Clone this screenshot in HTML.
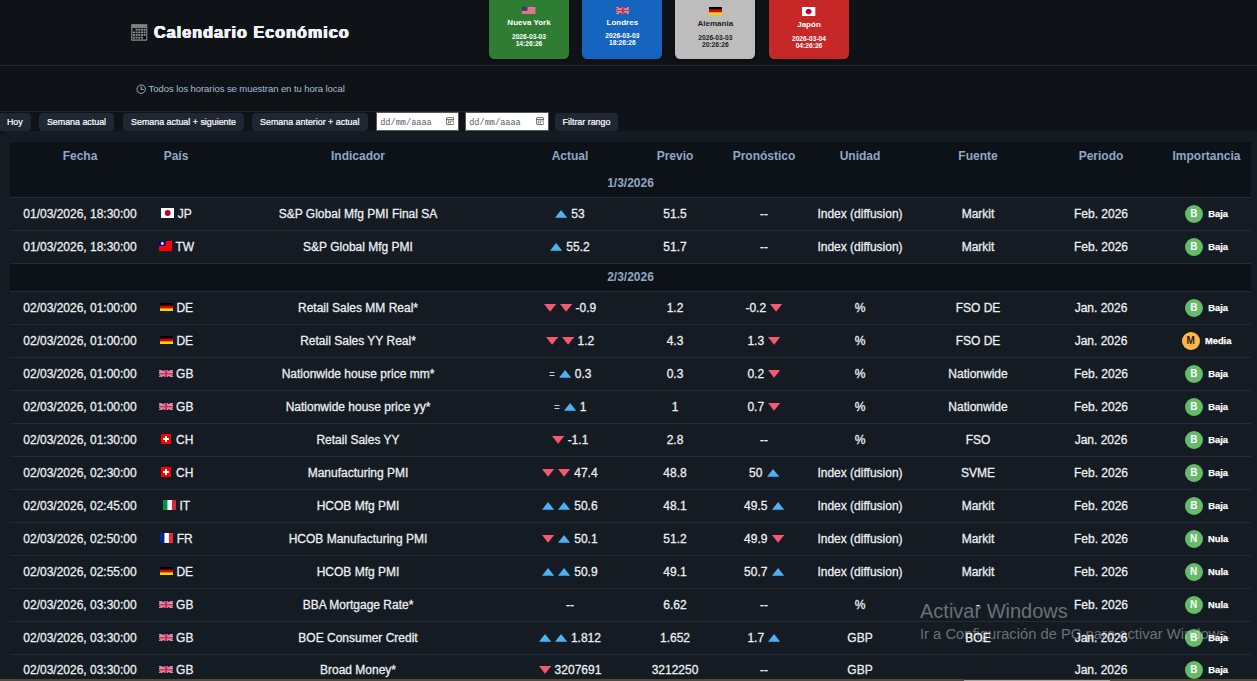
<!DOCTYPE html>
<html lang="es"><head><meta charset="utf-8"><title>Calendario Económico</title>
<style>
*{box-sizing:border-box}
html,body{margin:0;padding:0}
body{width:1257px;height:681px;overflow:hidden;position:relative;background:#0f1216;font-family:"Liberation Sans",Arial,sans-serif;color:#e6edf3;font-variant-ligatures:none}
.hd{position:absolute;left:0;top:0;width:1257px;height:66px;border-bottom:1px solid #1f2935}
.ti{position:absolute;left:131.2px;top:23.8px;width:16.4px;height:17px}
h1{position:absolute;left:154px;top:23px;margin:0;font-size:16px;line-height:20px;font-weight:bold;letter-spacing:1.12px;color:#f0f3f7;white-space:nowrap;text-shadow:0.55px 0 0 #f0f3f7,-0.55px 0 0 #f0f3f7,0.25px 0 0 #f0f3f7,-0.25px 0 0 #f0f3f7}
.card{position:absolute;top:-8px;width:80px;height:67px;border-radius:5.2px;text-align:center;font-weight:bold;box-shadow:0 1px 3px rgba(0,0,0,.35)}
.card div{position:absolute;left:0;width:80px;text-align:center;white-space:nowrap}
.cf{line-height:0}
.card .fl{display:block;margin:0 auto}
.cn{font-size:8px;line-height:10px;height:10px}
.ct{font-size:6.67px;line-height:8px;height:8px}
.info{position:absolute;left:0;top:66px;width:481px;height:46px;border-bottom:1px solid #1b232d}
.btn{position:absolute;top:113px;height:18px;border-radius:4px;background:#1f2832;color:#fff;font-size:8.89px;line-height:18px;text-align:center;white-space:nowrap;-webkit-text-stroke:0.2px}
.di{position:absolute;top:112px;height:18.5px;background:#fff;border:1px solid #55595f;font-family:"Liberation Mono",monospace;font-size:8.6px;line-height:17px;color:#5a5d66;padding-left:3.2px;padding-top:1.7px;white-space:nowrap}
.di svg{position:absolute;right:3.8px;top:4.3px}
.wrap{position:absolute;left:-0.7px;top:131.3px;width:1262.4px;height:600px;background:#151b22;border-radius:9px}
table{position:absolute;left:10.7px;top:10.7px;width:1241px;border-collapse:separate;border-spacing:0;table-layout:fixed;font-size:12px}
th{height:28px;background:#0d1218;color:#90a7c6;font-weight:bold;font-size:12px;padding:0;text-align:center;vertical-align:middle}
td{height:33px;padding:0;text-align:center;vertical-align:middle;white-space:nowrap;border-bottom:1px solid #222b36;color:#eceff3;-webkit-text-stroke:0.28px}
tbody tr:last-child td{padding-bottom:2px}
td:nth-child(2){padding-left:.8px}
tr.g td{height:28px;background:#0d1218;color:#90a7c6;font-weight:bold;padding-bottom:0;-webkit-text-stroke:0}
i{display:inline-block;font-style:normal;position:relative;height:0;vertical-align:baseline}
i svg{position:absolute;left:0;bottom:0}
.f{width:13.33px;margin-right:3.33px}
.a{width:12.2px;margin-right:3.75px}
.a.r{margin-right:0;margin-left:4.3px}
.ae{display:inline-block;width:7px;text-align:center;color:#c9ced5;position:relative;top:-0.4px;font-size:10px;-webkit-text-stroke:0}
.bd{width:18px;margin-right:5.3px}
.bd b{position:absolute;left:0;bottom:-4.9px;width:18px;height:18px;border-radius:50%;font-size:10px;line-height:18px;text-align:center;font-weight:bold}
.b b,.n b{background:#66bb6a;color:#fff}
.m b{background:#ffb74d;color:#222}
.bd b{-webkit-text-stroke:0}
.lb{-webkit-text-stroke:0.25px}
.lb{font-size:9.33px;font-weight:bold;color:#fff;position:relative;top:-.5px}
.wm{position:absolute;left:920px;top:599px;color:rgba(255,255,255,.38);white-space:nowrap;pointer-events:none}
.wm div:first-child{font-size:20px;line-height:24px}
.wm div:last-child{font-size:14.75px;line-height:18px;margin-top:2px}
.bar{position:absolute;left:0;top:678.8px;width:1257px;height:3px;background:#514a38}
.bar i{position:absolute;left:963.6px;top:0;width:146.5px;height:3px;background:linear-gradient(#3b3627 0,#3b3627 1px,#a8a69a 1.2px);display:block}
</style></head><body>
<div class="hd">
<svg class="ti" viewBox="0 0 16.4 17"><rect width="16.4" height="17" rx="1.2" fill="#6b6c6e"/><rect x="0.6" y="0.5" width="15.2" height="3.2" rx="0.8" fill="#7f8082"/><rect x="1.5" y="4.2" width="13.5" height="11" fill="#08090b"/><g fill="#8f9194"><rect x="4.58" y="4.90" width="2.05" height="1.75"/><rect x="7.26" y="4.90" width="2.05" height="1.75"/><rect x="9.94" y="4.90" width="2.05" height="1.75"/><rect x="12.62" y="4.90" width="2.05" height="1.75"/><rect x="1.90" y="7.52" width="2.05" height="1.75"/><rect x="4.58" y="7.52" width="2.05" height="1.75"/><rect x="7.26" y="7.52" width="2.05" height="1.75"/><rect x="9.94" y="7.52" width="2.05" height="1.75"/><rect x="12.62" y="7.52" width="2.05" height="1.75"/><rect x="1.90" y="10.14" width="2.05" height="1.75"/><rect x="4.58" y="10.14" width="2.05" height="1.75"/><rect x="7.26" y="10.14" width="2.05" height="1.75"/><rect x="9.94" y="10.14" width="2.05" height="1.75"/><rect x="12.62" y="10.14" width="2.05" height="1.75"/><rect x="1.90" y="12.76" width="2.05" height="1.75"/><rect x="4.58" y="12.76" width="2.05" height="1.75"/><rect x="7.26" y="12.76" width="2.05" height="1.75"/><rect x="9.94" y="12.76" width="2.05" height="1.75"/></g></svg>
<h1>Calendario Económico</h1>
<div class="card" style="left:489px;background:#2e7d32;color:#fff"><div class="cf" style="top:14.9px"><svg class="fl" width="13.33" height="7.1" viewBox="0 0 20 11" preserveAspectRatio="none"><rect width="20" height="11" fill="#e58a9b"/><path d="M0 1.27H20M0 2.96H20M0 4.65H20M0 6.34H20M0 8.03H20M0 9.72H20" stroke="#d95f78" stroke-width="0.85"/><rect width="8.2" height="5.9" fill="#3c3b6e"/></svg></div><div class="cn" style="top:25.9px">Nueva York</div><div class="ct" style="top:40.9px">2026-03-03</div><div class="ct" style="top:48.2px">14:26:26</div></div><div class="card" style="left:582.33px;background:#1565c0;color:#fff"><div class="cf" style="top:14.9px"><svg class="fl" width="13.6" height="7.0" viewBox="0 0 20 10" preserveAspectRatio="none"><rect width="20" height="10" fill="#27367a"/><path d="M0 0L20 10M20 0L0 10" stroke="#f2e6ea" stroke-width="2.2"/><path d="M0 0L20 10M20 0L0 10" stroke="#d83a58" stroke-width="1.1"/><path d="M10 0V10M0 5H20" stroke="#f6eef0" stroke-width="4.2"/><path d="M10 0V10" stroke="#d62b4b" stroke-width="3.2"/><path d="M0 5H20" stroke="#d62b4b" stroke-width="3"/></svg></div><div class="cn" style="top:25.9px">Londres</div><div class="ct" style="top:39.8px">2026-03-03</div><div class="ct" style="top:47.1px">18:26:26</div></div><div class="card" style="left:675.33px;background:#bdbdbd;color:#222"><div class="cf" style="top:14.8px"><svg class="fl" width="13.33" height="8.2" viewBox="0 0 20 12" preserveAspectRatio="none"><rect width="20" height="4" fill="#000"/><rect y="4" width="20" height="4" fill="#dd0000"/><rect y="8" width="20" height="4" fill="#ffce00"/></svg></div><div class="cn" style="top:26.7px">Alemania</div><div class="ct" style="top:41.7px">2026-03-03</div><div class="ct" style="top:49.3px">20:26:26</div></div><div class="card" style="left:769px;background:#c62828;color:#fff"><div class="cf" style="top:14.8px"><svg class="fl" width="13.33" height="9.1" viewBox="0 0 20 15" preserveAspectRatio="none"><rect width="20" height="15" fill="#fff"/><circle cx="10" cy="7.5" r="4.4" fill="#bc002d"/></svg></div><div class="cn" style="top:27.9px">Japón</div><div class="ct" style="top:42.7px">2026-03-04</div><div class="ct" style="top:50.3px">04:26:26</div></div>
</div>
<div class="info"></div>
<svg style="position:absolute;left:135.8px;top:83.9px" width="10.4" height="10.4" viewBox="0 0 10.4 10.4"><circle cx="5.2" cy="5.2" r="4.2" fill="none" stroke="#a7bcd6" stroke-width="0.9"/><path d="M5.2 2.5V5.5H7.6" fill="none" stroke="#a7bcd6" stroke-width="1"/></svg>
<span style="position:absolute;left:148.6px;top:83.2px;font-size:9.5px;letter-spacing:-.075px;line-height:12px;color:#a7bcd6;white-space:nowrap">Todos los horarios se muestran en tu hora local</span>
<div class="btn" style="left:-2px;width:33px;padding-left:0.6px">Hoy</div>
<div class="btn" style="left:39px;width:75px">Semana actual</div>
<div class="btn" style="left:123px;width:121px">Semana actual + siguiente</div>
<div class="btn" style="left:252px;width:115.5px">Semana anterior + actual</div>
<div class="di" style="left:376px;width:83px">dd/mm/aaaa<svg width="8.4" height="8" viewBox="0 0 8.4 8"><rect x="0.4" y="0.4" width="7.6" height="7.2" rx="1.6" fill="none" stroke="#3a3a3a" stroke-width="0.75"/><path d="M0.4 2.5H8" stroke="#3a3a3a" stroke-width="0.7"/><rect x="1.9" y="3.6" width="1.2" height="1" fill="#444"/><rect x="3.7" y="3.6" width="1.2" height="1" fill="#444"/><rect x="5.5" y="3.6" width="1.2" height="1" fill="#444"/><rect x="1.9" y="5.3" width="1.2" height="1" fill="#444"/><rect x="3.7" y="5.3" width="1.2" height="1" fill="#444"/></svg></div>
<div class="di" style="left:465px;width:84px">dd/mm/aaaa<svg width="8.4" height="8" viewBox="0 0 8.4 8"><rect x="0.4" y="0.4" width="7.6" height="7.2" rx="1.6" fill="none" stroke="#3a3a3a" stroke-width="0.75"/><path d="M0.4 2.5H8" stroke="#3a3a3a" stroke-width="0.7"/><rect x="1.9" y="3.6" width="1.2" height="1" fill="#444"/><rect x="3.7" y="3.6" width="1.2" height="1" fill="#444"/><rect x="5.5" y="3.6" width="1.2" height="1" fill="#444"/><rect x="1.9" y="5.3" width="1.2" height="1" fill="#444"/><rect x="3.7" y="5.3" width="1.2" height="1" fill="#444"/></svg></div>
<div class="btn" style="left:555px;width:63px">Filtrar rango</div>
<div class="wrap">
<table>
<colgroup><col style="width:140px"><col style="width:52px"><col style="width:312px"><col style="width:112px"><col style="width:98px"><col style="width:80px"><col style="width:112px"><col style="width:124px"><col style="width:122px"><col style="width:89px"></colgroup>
<thead><tr><th>Fecha</th><th>País</th><th>Indicador</th><th>Actual</th><th>Previo</th><th>Pronóstico</th><th>Unidad</th><th>Fuente</th><th>Periodo</th><th>Importancia</th></tr></thead>
<tbody>
<tr class="g"><td colspan="10">1/3/2026</td></tr>
<tr><td>01/03/2026, 18:30:00</td><td><i class="f"><svg style="left:0.00px;bottom:-0.20px" width="13.33" height="10" viewBox="0 0 20 15" preserveAspectRatio="none"><rect width="20" height="15" fill="#fff"/><circle cx="10" cy="7.5" r="4.4" fill="#bc002d"/></svg></i>JP</td><td>S&amp;P Global Mfg PMI Final SA</td><td><i class="a"><svg width="12.2" height="7.7" viewBox="0 0 12.2 7.7"><path d="M6.1 0L12.2 7.7H0Z" fill="#4db2f5"/></svg></i>53</td><td>51.5</td><td>--</td><td>Index (diffusion)</td><td>Markit</td><td>Feb. 2026</td><td><i class="bd b"><b>B</b></i><span class="lb">Baja</span></td></tr>
<tr><td>01/03/2026, 18:30:00</td><td><i class="f"><svg style="left:0.00px;bottom:-0.20px" width="13.33" height="10" viewBox="0 0 20 15" preserveAspectRatio="none"><rect width="20" height="15" fill="#fe0000"/><rect width="10" height="7.5" fill="#000095"/><circle cx="5" cy="3.75" r="2.1" fill="#fff"/></svg></i>TW</td><td>S&amp;P Global Mfg PMI</td><td><i class="a"><svg width="12.2" height="7.7" viewBox="0 0 12.2 7.7"><path d="M6.1 0L12.2 7.7H0Z" fill="#4db2f5"/></svg></i>55.2</td><td>51.7</td><td>--</td><td>Index (diffusion)</td><td>Markit</td><td>Feb. 2026</td><td><i class="bd b"><b>B</b></i><span class="lb">Baja</span></td></tr>
<tr class="g"><td colspan="10">2/3/2026</td></tr>
<tr><td>02/03/2026, 01:00:00</td><td><i class="f"><svg style="left:0.00px;bottom:0.80px" width="13.33" height="8" viewBox="0 0 20 12" preserveAspectRatio="none"><rect width="20" height="4" fill="#000"/><rect y="4" width="20" height="4" fill="#dd0000"/><rect y="8" width="20" height="4" fill="#ffce00"/></svg></i>DE</td><td>Retail Sales MM Real*</td><td><i class="a"><svg width="12.2" height="7.7" viewBox="0 0 12.2 7.7"><path d="M0 0H12.2L6.1 7.7Z" fill="#f6586e"/></svg></i><i class="a"><svg width="12.2" height="7.7" viewBox="0 0 12.2 7.7"><path d="M0 0H12.2L6.1 7.7Z" fill="#f6586e"/></svg></i>-0.9</td><td>1.2</td><td>-0.2<i class="a r"><svg width="12.2" height="7.7" viewBox="0 0 12.2 7.7"><path d="M0 0H12.2L6.1 7.7Z" fill="#f6586e"/></svg></i></td><td>%</td><td>FSO DE</td><td>Jan. 2026</td><td><i class="bd b"><b>B</b></i><span class="lb">Baja</span></td></tr>
<tr><td>02/03/2026, 01:00:00</td><td><i class="f"><svg style="left:0.00px;bottom:0.80px" width="13.33" height="8" viewBox="0 0 20 12" preserveAspectRatio="none"><rect width="20" height="4" fill="#000"/><rect y="4" width="20" height="4" fill="#dd0000"/><rect y="8" width="20" height="4" fill="#ffce00"/></svg></i>DE</td><td>Retail Sales YY Real*</td><td><i class="a"><svg width="12.2" height="7.7" viewBox="0 0 12.2 7.7"><path d="M0 0H12.2L6.1 7.7Z" fill="#f6586e"/></svg></i><i class="a"><svg width="12.2" height="7.7" viewBox="0 0 12.2 7.7"><path d="M0 0H12.2L6.1 7.7Z" fill="#f6586e"/></svg></i>1.2</td><td>4.3</td><td>1.3<i class="a r"><svg width="12.2" height="7.7" viewBox="0 0 12.2 7.7"><path d="M0 0H12.2L6.1 7.7Z" fill="#f6586e"/></svg></i></td><td>%</td><td>FSO DE</td><td>Jan. 2026</td><td><i class="bd m"><b>M</b></i><span class="lb">Media</span></td></tr>
<tr><td>02/03/2026, 01:00:00</td><td><i class="f"><svg style="left:-0.38px;bottom:1.20px" width="14.1" height="7.2" viewBox="0 0 20 10" preserveAspectRatio="none"><rect width="20" height="10" fill="#27367a"/><path d="M0 0L20 10M20 0L0 10" stroke="#f2e6ea" stroke-width="2.2"/><path d="M0 0L20 10M20 0L0 10" stroke="#d83a58" stroke-width="1.1"/><path d="M10 0V10M0 5H20" stroke="#f6eef0" stroke-width="4.2"/><path d="M10 0V10" stroke="#d62b4b" stroke-width="3.2"/><path d="M0 5H20" stroke="#d62b4b" stroke-width="3"/></svg></i>GB</td><td>Nationwide house price mm*</td><td><span class="ae">=</span> <i class="a"><svg width="12.2" height="7.7" viewBox="0 0 12.2 7.7"><path d="M6.1 0L12.2 7.7H0Z" fill="#4db2f5"/></svg></i>0.3</td><td>0.3</td><td>0.2<i class="a r"><svg width="12.2" height="7.7" viewBox="0 0 12.2 7.7"><path d="M0 0H12.2L6.1 7.7Z" fill="#f6586e"/></svg></i></td><td>%</td><td>Nationwide</td><td>Feb. 2026</td><td><i class="bd b"><b>B</b></i><span class="lb">Baja</span></td></tr>
<tr><td>02/03/2026, 01:00:00</td><td><i class="f"><svg style="left:-0.38px;bottom:1.20px" width="14.1" height="7.2" viewBox="0 0 20 10" preserveAspectRatio="none"><rect width="20" height="10" fill="#27367a"/><path d="M0 0L20 10M20 0L0 10" stroke="#f2e6ea" stroke-width="2.2"/><path d="M0 0L20 10M20 0L0 10" stroke="#d83a58" stroke-width="1.1"/><path d="M10 0V10M0 5H20" stroke="#f6eef0" stroke-width="4.2"/><path d="M10 0V10" stroke="#d62b4b" stroke-width="3.2"/><path d="M0 5H20" stroke="#d62b4b" stroke-width="3"/></svg></i>GB</td><td>Nationwide house price yy*</td><td><span class="ae">=</span> <i class="a"><svg width="12.2" height="7.7" viewBox="0 0 12.2 7.7"><path d="M6.1 0L12.2 7.7H0Z" fill="#4db2f5"/></svg></i>1</td><td>1</td><td>0.7<i class="a r"><svg width="12.2" height="7.7" viewBox="0 0 12.2 7.7"><path d="M0 0H12.2L6.1 7.7Z" fill="#f6586e"/></svg></i></td><td>%</td><td>Nationwide</td><td>Feb. 2026</td><td><i class="bd b"><b>B</b></i><span class="lb">Baja</span></td></tr>
<tr><td>02/03/2026, 01:30:00</td><td><i class="f"><svg style="left:1.67px;bottom:-0.20px" width="10" height="10" viewBox="0 0 20 20" preserveAspectRatio="none"><rect width="20" height="20" fill="#ff0000"/><path d="M10 4V16M4 10H16" stroke="#fff" stroke-width="3.8"/></svg></i>CH</td><td>Retail Sales YY</td><td><i class="a"><svg width="12.2" height="7.7" viewBox="0 0 12.2 7.7"><path d="M0 0H12.2L6.1 7.7Z" fill="#f6586e"/></svg></i>-1.1</td><td>2.8</td><td>--</td><td>%</td><td>FSO</td><td>Jan. 2026</td><td><i class="bd b"><b>B</b></i><span class="lb">Baja</span></td></tr>
<tr><td>02/03/2026, 02:30:00</td><td><i class="f"><svg style="left:1.67px;bottom:-0.20px" width="10" height="10" viewBox="0 0 20 20" preserveAspectRatio="none"><rect width="20" height="20" fill="#ff0000"/><path d="M10 4V16M4 10H16" stroke="#fff" stroke-width="3.8"/></svg></i>CH</td><td>Manufacturing PMI</td><td><i class="a"><svg width="12.2" height="7.7" viewBox="0 0 12.2 7.7"><path d="M0 0H12.2L6.1 7.7Z" fill="#f6586e"/></svg></i><i class="a"><svg width="12.2" height="7.7" viewBox="0 0 12.2 7.7"><path d="M0 0H12.2L6.1 7.7Z" fill="#f6586e"/></svg></i>47.4</td><td>48.8</td><td>50<i class="a r"><svg width="12.2" height="7.7" viewBox="0 0 12.2 7.7"><path d="M6.1 0L12.2 7.7H0Z" fill="#4db2f5"/></svg></i></td><td>Index (diffusion)</td><td>SVME</td><td>Feb. 2026</td><td><i class="bd b"><b>B</b></i><span class="lb">Baja</span></td></tr>
<tr><td>02/03/2026, 02:45:00</td><td><i class="f"><svg style="left:0.00px;bottom:-0.20px" width="13.33" height="10" viewBox="0 0 20 15" preserveAspectRatio="none"><rect width="20" height="15" fill="#fff"/><rect width="6.67" height="15" fill="#009246"/><rect x="13.33" width="6.67" height="15" fill="#ce2b37"/></svg></i>IT</td><td>HCOB Mfg PMI</td><td><i class="a"><svg width="12.2" height="7.7" viewBox="0 0 12.2 7.7"><path d="M6.1 0L12.2 7.7H0Z" fill="#4db2f5"/></svg></i><i class="a"><svg width="12.2" height="7.7" viewBox="0 0 12.2 7.7"><path d="M6.1 0L12.2 7.7H0Z" fill="#4db2f5"/></svg></i>50.6</td><td>48.1</td><td>49.5<i class="a r"><svg width="12.2" height="7.7" viewBox="0 0 12.2 7.7"><path d="M6.1 0L12.2 7.7H0Z" fill="#4db2f5"/></svg></i></td><td>Index (diffusion)</td><td>Markit</td><td>Feb. 2026</td><td><i class="bd b"><b>B</b></i><span class="lb">Baja</span></td></tr>
<tr><td>02/03/2026, 02:50:00</td><td><i class="f"><svg style="left:0.00px;bottom:-0.20px" width="13.33" height="10" viewBox="0 0 20 15" preserveAspectRatio="none"><rect width="20" height="15" fill="#fff"/><rect width="6.67" height="15" fill="#002395"/><rect x="13.33" width="6.67" height="15" fill="#ed2939"/></svg></i>FR</td><td>HCOB Manufacturing PMI</td><td><i class="a"><svg width="12.2" height="7.7" viewBox="0 0 12.2 7.7"><path d="M0 0H12.2L6.1 7.7Z" fill="#f6586e"/></svg></i><i class="a"><svg width="12.2" height="7.7" viewBox="0 0 12.2 7.7"><path d="M6.1 0L12.2 7.7H0Z" fill="#4db2f5"/></svg></i>50.1</td><td>51.2</td><td>49.9<i class="a r"><svg width="12.2" height="7.7" viewBox="0 0 12.2 7.7"><path d="M0 0H12.2L6.1 7.7Z" fill="#f6586e"/></svg></i></td><td>Index (diffusion)</td><td>Markit</td><td>Feb. 2026</td><td><i class="bd n"><b>N</b></i><span class="lb">Nula</span></td></tr>
<tr><td>02/03/2026, 02:55:00</td><td><i class="f"><svg style="left:0.00px;bottom:0.80px" width="13.33" height="8" viewBox="0 0 20 12" preserveAspectRatio="none"><rect width="20" height="4" fill="#000"/><rect y="4" width="20" height="4" fill="#dd0000"/><rect y="8" width="20" height="4" fill="#ffce00"/></svg></i>DE</td><td>HCOB Mfg PMI</td><td><i class="a"><svg width="12.2" height="7.7" viewBox="0 0 12.2 7.7"><path d="M6.1 0L12.2 7.7H0Z" fill="#4db2f5"/></svg></i><i class="a"><svg width="12.2" height="7.7" viewBox="0 0 12.2 7.7"><path d="M6.1 0L12.2 7.7H0Z" fill="#4db2f5"/></svg></i>50.9</td><td>49.1</td><td>50.7<i class="a r"><svg width="12.2" height="7.7" viewBox="0 0 12.2 7.7"><path d="M6.1 0L12.2 7.7H0Z" fill="#4db2f5"/></svg></i></td><td>Index (diffusion)</td><td>Markit</td><td>Feb. 2026</td><td><i class="bd n"><b>N</b></i><span class="lb">Nula</span></td></tr>
<tr><td>02/03/2026, 03:30:00</td><td><i class="f"><svg style="left:-0.38px;bottom:1.20px" width="14.1" height="7.2" viewBox="0 0 20 10" preserveAspectRatio="none"><rect width="20" height="10" fill="#27367a"/><path d="M0 0L20 10M20 0L0 10" stroke="#f2e6ea" stroke-width="2.2"/><path d="M0 0L20 10M20 0L0 10" stroke="#d83a58" stroke-width="1.1"/><path d="M10 0V10M0 5H20" stroke="#f6eef0" stroke-width="4.2"/><path d="M10 0V10" stroke="#d62b4b" stroke-width="3.2"/><path d="M0 5H20" stroke="#d62b4b" stroke-width="3"/></svg></i>GB</td><td>BBA Mortgage Rate*</td><td>--</td><td>6.62</td><td>--</td><td>%</td><td>-</td><td>Feb. 2026</td><td><i class="bd n"><b>N</b></i><span class="lb">Nula</span></td></tr>
<tr><td>02/03/2026, 03:30:00</td><td><i class="f"><svg style="left:-0.38px;bottom:1.20px" width="14.1" height="7.2" viewBox="0 0 20 10" preserveAspectRatio="none"><rect width="20" height="10" fill="#27367a"/><path d="M0 0L20 10M20 0L0 10" stroke="#f2e6ea" stroke-width="2.2"/><path d="M0 0L20 10M20 0L0 10" stroke="#d83a58" stroke-width="1.1"/><path d="M10 0V10M0 5H20" stroke="#f6eef0" stroke-width="4.2"/><path d="M10 0V10" stroke="#d62b4b" stroke-width="3.2"/><path d="M0 5H20" stroke="#d62b4b" stroke-width="3"/></svg></i>GB</td><td>BOE Consumer Credit</td><td><i class="a"><svg width="12.2" height="7.7" viewBox="0 0 12.2 7.7"><path d="M6.1 0L12.2 7.7H0Z" fill="#4db2f5"/></svg></i><i class="a"><svg width="12.2" height="7.7" viewBox="0 0 12.2 7.7"><path d="M6.1 0L12.2 7.7H0Z" fill="#4db2f5"/></svg></i>1.812</td><td>1.652</td><td>1.7<i class="a r"><svg width="12.2" height="7.7" viewBox="0 0 12.2 7.7"><path d="M6.1 0L12.2 7.7H0Z" fill="#4db2f5"/></svg></i></td><td>GBP</td><td>BOE</td><td>Jan. 2026</td><td><i class="bd b"><b>B</b></i><span class="lb">Baja</span></td></tr>
<tr><td>02/03/2026, 03:30:00</td><td><i class="f"><svg style="left:-0.38px;bottom:1.20px" width="14.1" height="7.2" viewBox="0 0 20 10" preserveAspectRatio="none"><rect width="20" height="10" fill="#27367a"/><path d="M0 0L20 10M20 0L0 10" stroke="#f2e6ea" stroke-width="2.2"/><path d="M0 0L20 10M20 0L0 10" stroke="#d83a58" stroke-width="1.1"/><path d="M10 0V10M0 5H20" stroke="#f6eef0" stroke-width="4.2"/><path d="M10 0V10" stroke="#d62b4b" stroke-width="3.2"/><path d="M0 5H20" stroke="#d62b4b" stroke-width="3"/></svg></i>GB</td><td>Broad Money*</td><td><i class="a"><svg width="12.2" height="7.7" viewBox="0 0 12.2 7.7"><path d="M0 0H12.2L6.1 7.7Z" fill="#f6586e"/></svg></i>3207691</td><td>3212250</td><td>--</td><td>GBP</td><td></td><td>Jan. 2026</td><td><i class="bd b"><b>B</b></i><span class="lb">Baja</span></td></tr>
</tbody></table>
</div>
<div class="wm"><div>Activar Windows</div><div>Ir a Configuración de PC para activar Windows.</div></div>
<div class="bar"><i></i></div>
</body></html>
